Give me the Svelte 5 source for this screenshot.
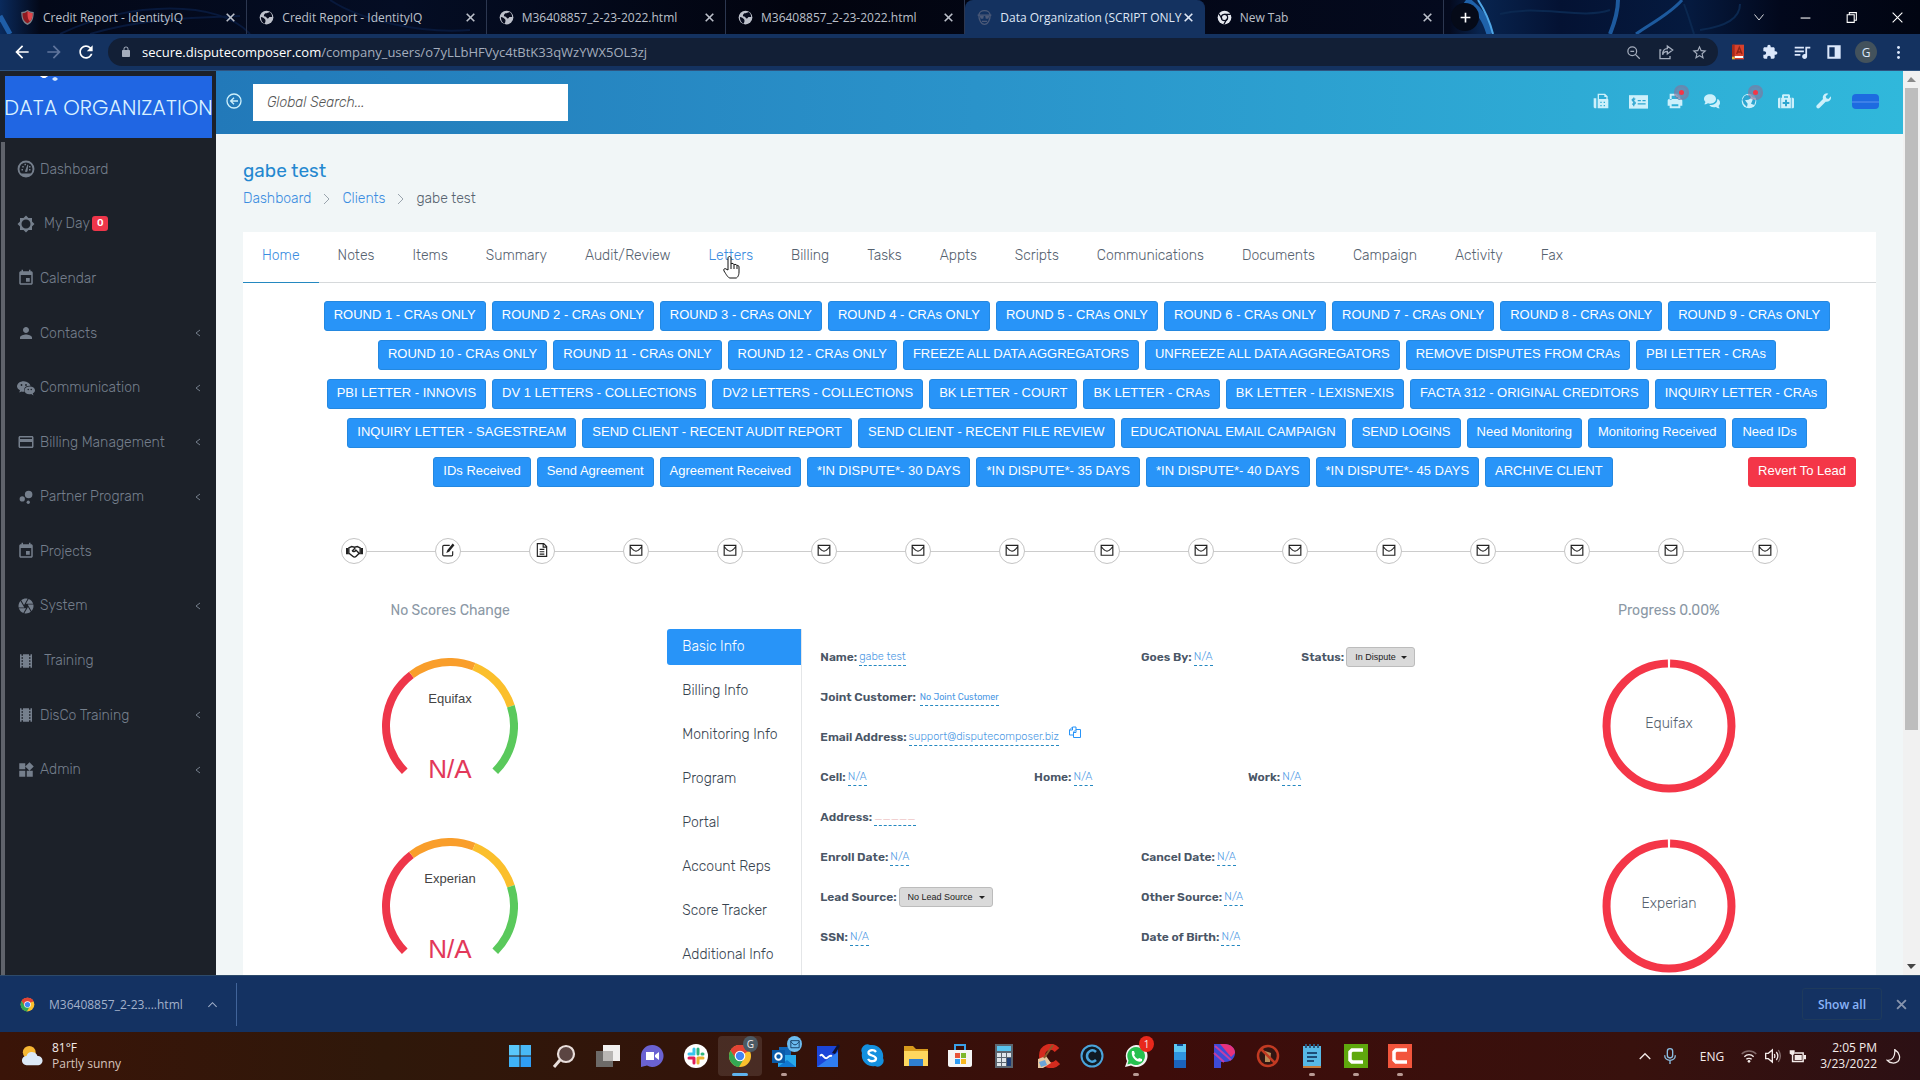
<script>
  const icons = {
    back: '<path d="M20 11H7.83l5.59-5.59L12 4l-8 8 8 8 1.41-1.41L7.83 13H20v-2z"/>',
    forward: '<path d="M4 11h12.17l-5.59-5.59L12 4l8 8-8 8-1.41-1.41L16.17 13H4v-2z"/>',
    reload: '<path d="M17.65 6.35C16.2 4.9 14.21 4 12 4c-4.42 0-7.99 3.58-7.99 8s3.57 8 7.99 8c3.73 0 6.84-2.55 7.73-6h-2.08c-.82 2.33-3.04 4-5.65 4-3.31 0-6-2.69-6-6s2.69-6 6-6c1.66 0 3.14.69 4.22 1.78L13 11h7V4l-2.35 2.35z"/>',
    lock: '<path d="M18 8h-1V6c0-2.76-2.24-5-5-5S7 3.24 7 6v2H6c-1.1 0-2 .9-2 2v10c0 1.1.9 2 2 2h12c1.1 0 2-.9 2-2V10c0-1.1-.9-2-2-2zM15.1 8H8.9V6c0-1.71 1.39-3.1 3.1-3.1s3.1 1.39 3.1 3.1v2z"/>',
    zoomOut: '<g fill="none" stroke="currentColor" stroke-width="2"><circle cx="10" cy="10" r="7"/><path d="M15 15l7 7M7 10h6"/></g>',
    share: '<g fill="none" stroke="currentColor" stroke-width="2"><path d="M5 9H3v13h15v-4"/><path d="M14 3l8 6-8 6v-4c-4 0-6 2-7 5 0-6 3-9 7-9z"/></g>',
    star: '<path d="M22 9.24l-7.19-.62L12 2 9.19 8.63 2 9.24l5.46 4.73L5.82 21 12 17.27 18.18 21l-1.63-7.03L22 9.24zM12 15.4l-3.76 2.27 1-4.28-3.32-2.88 4.38-.38L12 6.1l1.71 4.04 4.38.38-3.32 2.88 1 4.28L12 15.4z"/>',
    book: '<path fill="#d8412b" d="M4 1h17v17H4z"/><path fill="#a82a1a" d="M3 1h4v21H3z"/><path fill="#fff" d="M7 18h13v3H7z"/><path fill="#d8412b" d="M6 21h15v2H6z"/><path fill="#e7b93c" d="M3 19h4v4H3z"/><path fill="none" stroke="#8f2417" stroke-width="2" d="M10 15l4-10 4 10M12 12h5"/>',
    puzzle: '<path d="M20.5 11H19V7c0-1.1-.9-2-2-2h-4V3.5C13 2.12 11.88 1 10.5 1S8 2.12 8 3.5V5H4c-1.1 0-1.99.9-1.99 2v3.8H3.5c1.49 0 2.7 1.21 2.7 2.7s-1.21 2.7-2.7 2.7H2V20c0 1.1.9 2 2 2h3.8v-1.5c0-1.49 1.21-2.7 2.7-2.7 1.49 0 2.7 1.21 2.7 2.7V22H17c1.1 0 2-.9 2-2v-4h1.5c1.38 0 2.5-1.12 2.5-2.5S21.88 11 20.5 11z"/>',
    queue: '<path d="M14 4H1v2.500h13V4zm0 5H1v2.500h13V9zM1 16.500h8V14H1v2.500zM16 4v10.200c-.3-.1-.6-.2-1-.2-1.900 0-3.500 1.500-3.500 3.500S13.100 21 15 21s3.500-1.500 3.500-3.500V6.500H23V4h-7z"/>',
    panel: '<path d="M2 2h20v20H2zm3 3v14h8V5z" fill-rule="evenodd"/>',
    dots: '<circle cx="12" cy="4" r="2.300"/><circle cx="12" cy="12" r="2.300"/><circle cx="12" cy="20" r="2.300"/>',
    close: '<path d="M5 5l14 14M19 5L5 19" fill="none" stroke="currentColor" stroke-width="3"/>',
    plus: '<path d="M12 3v18M3 12h18" fill="none" stroke="currentColor" stroke-width="3"/>',
    winDown: '<path d="M3 7l9 11 9-11" fill="none" stroke="currentColor" stroke-width="1.700"/>',
    winMin: '<path d="M3 13h18" fill="none" stroke="currentColor" stroke-width="2"/>',
    winRestore: '<path d="M4 7h13v14H4zM8 7V3h13v14h-4" fill="none" stroke="currentColor" stroke-width="2"/>',
    winClose: '<path d="M3 3l18 18M21 3L3 21" fill="none" stroke="currentColor" stroke-width="2"/>',
    shield: '<path fill="#7d8088" d="M2 3c4 0 7-1 10-3 3 2 6 3 10 3 0 10-2 17-10 21C4 20 2 13 2 3z"/><path fill="#8f1a20" d="M4 5c4 0 5-1 8-3 3 2 5 3 8 3 0 8-2 13-8 16C6 18 4 13 4 5z"/><path fill="#e0474b" d="M12 2c3 2 5 3 8 3 0 6-1 10-4 13-4-3-4-9-4-16z"/>',
    globe: '<circle cx="12" cy="12" r="11"/><path fill="#070b1d" d="M10 5c3 0 5-1 7-2 3 2 4 5 4 8-2 1-4-1-5 1s-3 2-4 0-5-1-4-4c0-1 1-2 2-3zM3 11c3 0 5 2 7 4 1 2 0 5-1 7-4-2-6-6-6-11z"/>',
    face: '<g fill="none" stroke="#4c5a78" stroke-width="2"><path d="M3 9c0-5 4-8 9-8s9 3 9 8-3 14-9 14S3 14 3 9z"/><path d="M1 8h22M8 18h8"/></g><path fill="#4c5a78" d="M4 9h7l-1 5H6zM13 9h7l-2 5h-4z"/>',
    chromeMono: '<circle cx="12" cy="12" r="11" fill="#e6e9f0"/><circle cx="12" cy="12" r="5" fill="none" stroke="#070b1d" stroke-width="2"/><path d="M12 7h10M8 14L3 6M16 14l-5 9" stroke="#070b1d" stroke-width="2"/>',
    chrome: '<circle cx="12" cy="12" r="11" fill="#fbc02d"/><path fill="#e24435" d="M2.500 6.500A11 11 0 0 1 21.500 6.500L12 12z"/><path fill="#e24435" d="M12 7h9.800A11 11 0 0 0 2.500 6.500L7.500 15z"/><path fill="#34a853" d="M2.500 6.500A11 11 0 0 0 11 23l5-8.500-8 .5z"/><circle cx="12" cy="12" r="5.300" fill="#fff"/><circle cx="12" cy="12" r="4.200" fill="#4285f4"/>',
    arrowCircle: '<g fill="none" stroke="currentColor" stroke-width="2"><circle cx="12" cy="12" r="10.500"/><path d="M18 12H7M12 7l-5 5 5 5"/></g>',
    fax: '<path d="M1 8h4v15H2.500L1 21.500zM7 1h11l4 4v4c1 0 1 1 1 2v12H7zm2 2v6h11V6h-3V3zm2 10v2h2v-2zm5 0v2h2v-2zm-5 5v2h2v-2zm5 0v2h2v-2z" fill-rule="evenodd"/>',
    check: '<path d="M0 4h24v17H0z"/><g stroke="#2da5d0" stroke-width="1.500" fill="none"><path d="M8 9c-3-1-4 0-4 1 0 3 4 1 4 4 0 1-2 2-4 1M6 7v11M11 11h4M17 11h4M11 15h10"/></g>',
    printer: '<path d="M5 1h11l4 4v5H4V1zm2 3v6h10V6h-3V4zM1 12c0-2 1-3 3-3h16c2 0 3 1 3 3v7h-3v4H4v-4H1zm6 5v3h10v-3z" fill-rule="evenodd"/>',
    comments: '<path d="M9 2c5 0 9 3 9 7s-4 7-9 7c-1 0-2 0-3-.5C4 17 2 17 0 17c1-1 2-2 2-4C1 12 0 11 0 9c0-4 4-7 9-7z"/><path d="M20 9c3 1 4 3 4 6 0 2-1 3-2 4 0 2 1 3 2 4-2 0-4 0-6-2-5 1-8 0-10-3 8 0 12-3 12-9z"/>',
    world: '<circle cx="12" cy="12" r="11"/><path fill="#2da5d0" d="M8 3l6 1 1 4-4 2-5 1 4 5-1 5-5-5-2-6 3-5zM18 9l4 2-2 7-5-2z"/>',
    medkit: '<path d="M8 2h8c1 0 2 1 2 2v3h4c1 0 2 1 2 2v12c0 1-1 2-2 2H2c-1 0-2-1-2-2V9c0-1 1-2 2-2h4V4c0-1 1-2 2-2zm1 3v2h6V5z" fill-rule="evenodd"/><path fill="none" stroke="#2da5d0" stroke-width="1" d="M4 7v16M20 7v16"/><path fill="none" stroke="#2da5d0" stroke-width="3" d="M12 10v10M7 15h10"/>',
    wrench: '<path d="M15 1c2-1 4-1 5 0l-4 4 1 3 3 1 4-4c1 5-3 9-8 8l-9 9c-3 3-7-1-4-4l9-9c-1-3 0-6 3-8z"/>',
    gauge: '<g fill="none" stroke="currentColor" stroke-width="2.500"><circle cx="12" cy="12" r="10"/></g><path d="M5 18h14l-3 4H8z"/><path d="M11 14l3-8 1 1-1 8c-1 2-4 1-3-1zM6 12h2v2H6zM7 8h2v2H7zM10 5h2v2h-2zM16 12h2v2h-2zM16 8h2v2h-2z"/>',
    sun: '<path fill-rule="evenodd" d="M20 8.700V4h-4.700L12 .7 8.700 4H4v4.700L.7 12 4 15.300V20h4.700l3.300 3.300 3.300-3.300H20v-4.700l3.300-3.300zM12 18a6 6 0 1 1 0-12 6 6 0 0 1 0 12z"/>',
    event: '<path d="M17 12h-5v5h5v-5zM16 1v2H8V1H6v2H5c-1.110 0-1.990.9-1.990 2L3 19c0 1.100.89 2 2 2h14c1.100 0 2-.9 2-2V5c0-1.100-.9-2-2-2h-1V1h-2zm3 18H5V8h14v11z"/>',
    person: '<path d="M12 12c2.210 0 4-1.790 4-4s-1.790-4-4-4-4 1.790-4 4 1.790 4 4 4zm0 2c-2.670 0-8 1.340-8 4v2h16v-2c0-2.660-5.330-4-8-4z"/>',
    wechat: '<path d="M9 3c5 0 8 3 9 6-6-1-10 3-8 8-2 0-3 0-4-.5L3 18l1-3c-2-1-4-3-4-5 0-4 4-7 9-7z"/><path d="M17 10c4 0 7 2 7 5 0 2-1 3-3 4l1 3-3-2c-5 1-9-1-9-5 0-3 3-5 7-5z"/><g fill="#1c2129"><circle cx="6" cy="8" r="1.200"/><circle cx="12" cy="8" r="1.200"/><circle cx="15" cy="14" r="1"/><circle cx="19" cy="14" r="1"/></g>',
    card: '<path d="M20 4H4c-1.110 0-1.990.89-1.990 2L2 18c0 1.110.89 2 2 2h16c1.110 0 2-.89 2-2V6c0-1.110-.89-2-2-2zm0 14H4v-6h16v6zm0-10H4V6h16v2z"/>',
    bubbles: '<circle cx="7" cy="14.500" r="3.500"/><circle cx="15" cy="19" r="2.200"/><circle cx="15.500" cy="8.500" r="5"/>',
    shutter: '<path d="M9.400 10.500l4.770-8.260C13.470 2.090 12.750 2 12 2c-2.400 0-4.600.85-6.320 2.250l3.660 6.350.06-.1zM21.540 9c-.92-2.920-3.150-5.260-6-6.340L11.880 9h9.660zm.26 1h-7.490l.29.5 4.760 8.250C21 16.970 22 14.610 22 12c0-.69-.07-1.350-.2-2zM8.540 12l-3.900-6.750C3.010 7.030 2 9.390 2 12c0 .69.07 1.350.2 2h7.490l-1.150-2zm-6.080 3c.92 2.920 3.150 5.260 6 6.340L12.120 15H2.460zm11.270 0l-3.900 6.760c.7.150 1.420.24 2.170.24 2.400 0 4.600-.85 6.320-2.250l-3.660-6.350-.93 1.600z"/>',
    film: '<path d="M18 3v2h-2V3H8v2H6V3H4v18h2v-2h2v2h8v-2h2v2h2V3h-2zM8 17H6v-2h2v2zm0-4H6v-2h2v2zm0-4H6V7h2v2zm10 8h-2v-2h2v2zm0-4h-2v-2h2v2zm0-4h-2V7h2v2z"/>',
    widgets: '<path d="M13 13v8h8v-8h-8zM3 21h8v-8H3v8zM3 3v8h8V3H3zm13.660-1.310L11 7.340 16.660 13l5.660-5.660-5.660-5.650z"/>',
    handshake: '<g fill="none" stroke="currentColor" stroke-width="2"><path d="M4 7l4-2 4 1 4-1 4 2v8h-2l-4 4c-1 1-3 1-4 0l-5-4H4z"/><path d="M13 7l-4 4c1 2 4 1 5-1l5 5"/></g><path d="M0 7h3v9H0zM21 7h3v9h-3z"/>',
    edit: '<g fill="none" stroke="currentColor" stroke-width="2"><path d="M15 4H5C4 4 3 5 3 6v14c0 1 1 2 2 2h13c1 0 2-1 2-2v-6"/></g><path d="M20 1l3 3-9 11-5 2 2-5z"/>',
    file: '<g fill="none" stroke="currentColor" stroke-width="2"><path d="M4 1h11l5 5v17H4zM14 1v6h6M8 11h8M8 15h8M8 19h8"/></g>',
    mail: '<path d="M2 4h20v17H2zM2 6c3 4 6 8 10 8s7-4 10-8" fill="none" stroke="currentColor" stroke-width="2"/>',
    copy: '<g fill="none" stroke="currentColor" stroke-width="2"><path d="M9 18H1V8l6-6h7v5M7 2v6H1"/><path d="M9 12l5-5h9v16H9zM14 7v6H9"/></g>',
    windows: '<path fill="#5ac8fa" d="M1 1h10.500v10.500H1z"/><path fill="#49b8f7" d="M12.500 1H23v10.500H12.500z"/><path fill="#3fb2f7" d="M1 12.500h10.500V23H1z"/><path fill="#2f9df4" d="M12.500 12.500H23V23H12.500z"/>',
    search: '<circle cx="14" cy="10" r="8" fill="#5b4542" stroke="#e9dedb" stroke-width="2.200"/><path d="M8 16l-6 7" stroke="#e9dedb" stroke-width="3"/>',
    taskview: '<path fill="#f2f0ef" d="M7 1h17v16H7z"/><path fill="#6d6a68" d="M0 7h17v16H0z"/><path fill="#b9b6b4" d="M7 7h10v10H7z"/>',
    teams: '<path fill="#6a62d2" d="M12 1a11 11 0 1 1-5 20.500L1 23V12A11 11 0 0 1 12 1z"/><path fill="#fff" d="M6 8h8v8H6zM15 11l4-3v8l-4-3z"/>',
    slack: '<circle cx="12" cy="12" r="12" fill="#fff"/><g fill="none" stroke-width="3" stroke-linecap="round"><path stroke="#36c5f0" d="M10 5v4M5 10h5"/><path stroke="#2eb67d" d="M14 5v5M18 10h1"/><path stroke="#ecb22e" d="M14 14v5M14 14h5"/><path stroke="#e01e5a" d="M10 14v5M5 14h5"/></g>',
    outlook: '<path fill="#1066b8" d="M7 3h12v14H7z"/><path fill="#28a8ea" d="M6 11h18v12H6z"/><path fill="#0f78d4" d="M6 23l9-7 9 7z"/><path fill="#0a5aa8" d="M0 6h13v13H0z"/><circle cx="6.500" cy="12.500" r="3.200" fill="none" stroke="#fff" stroke-width="2"/>',
    whiteboard: '<path fill="#1b45d8" d="M1 2h21v21H1z"/><path fill="#2f7df0" d="M1 23L22 8v15z"/><path d="M4 12c3-4 4 4 7 2s3-3 5-2" fill="none" stroke="#fff" stroke-width="2"/><path d="M16 9l6-9 2 2-5 8z" fill="#0c1030"/>',
    skype: '<path fill="#1490df" d="M12 1a11 11 0 0 1 11 13 6 6 0 0 1-8 8A11 11 0 0 1 2 9a6 6 0 0 1 8-8z"/><path d="M16 8c-2-3-8-2-7.500 1 .5 3 7 2 7.500 5.500 0 3-6 4-8 .5" fill="none" stroke="#fff" stroke-width="2.300"/>',
    folder: '<path fill="#d89a1c" d="M0 2h9l3 3h12v6H0z"/><path fill="#ffd75e" d="M0 7h24v15H0z"/><path fill="#2f7fd1" d="M5 15h14v7H5z"/>',
    store: '<path fill="none" stroke="#3aa0e8" stroke-width="2" d="M7 7V1h10v6"/><path fill="#f5f5f5" d="M0 6h24v15c0 1-1 2-2 2H2c-1 0-2-1-2-2z"/><path fill="#e8553a" d="M7 9h5v5H7z"/><path fill="#7eb82e" d="M13 9h5v5h-5z"/><path fill="#2f9df4" d="M7 15h5v5H7z"/><path fill="#f7b820" d="M13 15h5v5h-5z"/>',
    calc: '<path fill="#5c6670" d="M3 0h18v24H3z"/><path fill="#59c3ee" d="M5 2h14v5H5z"/><g fill="#dfe5ea"><path d="M5 9h4v4H5zM10 9h4v4h-4zM15 9h4v4h-4zM5 14h4v4H5zM10 14h4v4h-4zM5 19h4v3H5zM10 19h4v3h-4z"/></g><path fill="#1d3d77" d="M15 14h4v8h-4z"/>',
    ccleaner: '<path d="M21 6c-5-6-15-3-15 6s10 12 16 6" fill="none" stroke="#d52b1e" stroke-width="6"/><path fill="#e6c8a2" d="M2 15l8-3 5 7-8 5H2z"/><path fill="#6ba4d8" d="M3 18l6-2 2 5-6 2z"/><path d="M8 14L17 1" stroke="#8b5a2b" stroke-width="2"/>',
    copyright: '<circle cx="12" cy="12" r="10.500" fill="#101a24" stroke="#4aa4dc" stroke-width="2"/><path d="M16 8c-4-4-9 0-9 4s5 8 9 4" fill="none" stroke="#4aa4dc" stroke-width="2.500"/>',
    whatsapp: '<path fill="#f2f2f2" d="M12 1a11 11 0 1 1-5 20.500L1 23l2-6A11 11 0 0 1 12 1z"/><path fill="#26c04f" d="M12 3a9 9 0 1 1-5 16.500L3.500 20.500l1-4A9 9 0 0 1 12 3z"/><path fill="#fff" d="M8 7h2l1 3-1 1c1 2 2 3 4 4l1-1 3 1v2c-3 3-12-3-10-10z"/>',
    phone: '<path fill="#5cc8f5" d="M6 0h12v8H6z"/><path fill="#2f95e0" d="M6 8h12v8H6z"/><path fill="#1a63bd" d="M6 16h12v8H6z"/><path fill="#124a91" d="M9 0h6v2H9z"/>',
    parade: '<path fill="#3d4bd8" d="M2 0h10c7 0 11 4 11 9s-4 9-10 9H9v6H2z"/><path fill="#e8327c" d="M8 0h4c7 0 11 4 11 9l-4 4z"/><path d="M3 2l16 14M2 9l10 9" stroke="#c13fa6" stroke-width="2"/>',
    blocked: '<circle cx="12" cy="12" r="10" fill="#301512" stroke="#c23a22" stroke-width="2.500"/><path fill="#b98c58" d="M9 7l6 2-1 9H9z"/><path d="M5 5l14 14" stroke="#c23a22" stroke-width="2.500"/>',
    notes: '<path fill="#57b9e6" d="M3 2h18v20H3z"/><path fill="#c57b3b" d="M3 22h18v2H3z"/><path d="M6 0v4M10 0v4M14 0v4M18 0v4" stroke="#2a5a80" stroke-width="2"/><path d="M7 9h10M7 13h10M7 17h7" stroke="#1d4d78" stroke-width="2"/>',
    camtasia: '<path fill="#5fa80d" d="M0 0h24v24H0z"/><path d="M19 6H8L6 8v8l2 2h11" fill="none" stroke="#fff" stroke-width="3.500"/>',
    camRec: '<path fill="#f2553c" d="M0 0h24v24H0z"/><path d="M19 6H8L6 8v8l2 2h11" fill="none" stroke="#fff" stroke-width="3.500"/>',
    weather: '<circle cx="9" cy="8" r="7" fill="#f7b733"/><path fill="#dce9f7" d="M6 22a5 5 0 0 1 0-10c1-3 4-5 7-4 3 0 4 2 5 4a5 5 0 0 1 1 10z"/>',
    up: '<path d="M3 17l9-9 9 9" fill="none" stroke="currentColor" stroke-width="2.300"/>',
    mic: '<g fill="none" stroke="currentColor" stroke-width="2"><rect x="8" y="1" width="8" height="14" rx="4"/><path d="M4 11c0 10 16 10 16 0M12 19v5"/></g>',
    wifi: '<g fill="none" stroke="currentColor" stroke-width="2"><path d="M1 9c6-6 16-6 22 0" opacity=".4"/><path d="M5 13c4-4 10-4 14 0M8 17c2-2 6-2 8 0"/></g><circle cx="12" cy="20" r="2"/>',
    sound: '<g fill="none" stroke="currentColor" stroke-width="2"><path d="M1 8h4l6-5v18l-6-5H1zM14 9c1 2 1 4 0 6M17 6c3 4 3 8 0 12"/><path d="M20 3c4 6 4 12 0 18" opacity=".4"/></g>',
    battery: '<path d="M8 7h12v12H5v-5" fill="none" stroke="currentColor" stroke-width="2"/><path d="M8 10h10v7H8zM21 10h3v6h-3zM1 3h7v5L6 10v4H4v-4L1 8z"/>',
    moon: '<path d="M14 1c8 5 10 14 5 19-5 4-13 3-17-2 8 1 13-6 12-17z" fill="none" stroke="currentColor" stroke-width="2"/>',
  }

  const browserTabs = [
    { icon: "shield", title: "Credit Report - IdentityIQ" },
    { icon: "globe", title: "Credit Report - IdentityIQ" },
    { icon: "globe", title: "M36408857_2-23-2022.html" },
    { icon: "globe", title: "M36408857_2-23-2022.html" },
    { icon: "face", title: "Data Organization (SCRIPT ONLY", active: true },
    { icon: "chromeMono", title: "New Tab" },
  ]

  const menu = [
    { icon: "gauge", label: "Dashboard" },
    { icon: "sun", label: "My Day", badge: 0, indent: true },
    { icon: "event", label: "Calendar" },
    { icon: "person", label: "Contacts", sub: true },
    { icon: "wechat", label: "Communication", sub: true },
    { icon: "card", label: "Billing Management", sub: true },
    { icon: "bubbles", label: "Partner Program", sub: true },
    { icon: "event", label: "Projects" },
    { icon: "shutter", label: "System", sub: true },
    { icon: "film", label: "Training", indent: true },
    { icon: "film", label: "DisCo Training", sub: true },
    { icon: "widgets", label: "Admin", sub: true },
  ]

  const tools = [
    { icon: "fax", label: "Fax" },
    { icon: "check", label: "Checks", size: 19 },
    { icon: "printer", label: "Print queue", alert: true },
    { icon: "comments", label: "Messages" },
    { icon: "world", label: "Portal", alert: true },
    { icon: "medkit", label: "Support" },
    { icon: "wrench", label: "Settings" },
  ]

  const tabs = [
    "Home", "Notes", "Items", "Summary", "Audit/Review", "Letters", "Billing", "Tasks",
    "Appts", "Scripts", "Communications", "Documents", "Campaign", "Activity", "Fax",
  ]

  const actionRows = [
    [1, 2, 3, 4, 5, 6, 7, 8, 9].map((n) => `ROUND ${n} - CRAs ONLY`),
    ["ROUND 10 - CRAs ONLY", "ROUND 11 - CRAs ONLY", "ROUND 12 - CRAs ONLY", "FREEZE ALL DATA AGGREGATORS", "UNFREEZE ALL DATA AGGREGATORS", "REMOVE DISPUTES FROM CRAs", "PBI LETTER - CRAs"],
    ["PBI LETTER - INNOVIS", "DV 1 LETTERS - COLLECTIONS", "DV2 LETTERS - COLLECTIONS", "BK LETTER - COURT", "BK LETTER - CRAs", "BK LETTER - LEXISNEXIS", "FACTA 312 - ORIGINAL CREDITORS", "INQUIRY LETTER - CRAs"],
    ["INQUIRY LETTER - SAGESTREAM", "SEND CLIENT - RECENT AUDIT REPORT", "SEND CLIENT - RECENT FILE REVIEW", "EDUCATIONAL EMAIL CAMPAIGN", "SEND LOGINS", "Need Monitoring", "Monitoring Received", "Need IDs"],
    ["IDs Received", "Send Agreement", "Agreement Received", "*IN DISPUTE*- 30 DAYS", "*IN DISPUTE*- 35 DAYS", "*IN DISPUTE*- 40 DAYS", "*IN DISPUTE*- 45 DAYS", "ARCHIVE CLIENT"],
  ]

  const steps = ["handshake", "edit", "file", ...Array(13).fill("mail")]

  const bureaus = ["Equifax", "Experian"]

  const sections = [
    "Basic Info", "Billing Info", "Monitoring Info", "Program",
    "Portal", "Account Reps", "Score Tracker", "Additional Info",
  ]

  // span is counted in twelfths of the row
  const fields = [
    { label: "Name:", value: "gabe test", span: 6 },
    { label: "Goes By:", value: "N/A", span: 3 },
    { label: "Status:", select: "In Dispute", span: 3 },
    { label: "Joint Customer:", value: "No Joint Customer", span: 12, small: true },
    { label: "Email Address:", value: "support@disputecomposer.biz", span: 12, copy: true },
    { label: "Cell:", value: "N/A", span: 4 },
    { label: "Home:", value: "N/A", span: 4 },
    { label: "Work:", value: "N/A", span: 4 },
    { label: "Address:", value: "_____", span: 12, blank: true },
    { label: "Enroll Date:", value: "N/A", span: 6 },
    { label: "Cancel Date:", value: "N/A", span: 6 },
    { label: "Lead Source:", select: "No Lead Source", span: 6 },
    { label: "Other Source:", value: "N/A", span: 6 },
    { label: "SSN:", value: "N/A", span: 6 },
    { label: "Date of Birth:", value: "N/A", span: 6 },
  ]

  const apps = [
    "windows", "search", "taskview", "teams", "slack", "chrome", "outlook", "whiteboard", "skype", "folder", "store",
    "calc", "ccleaner", "copyright", "whatsapp", "phone", "parade", "blocked", "notes", "camtasia", "camRec",
  ]
  const running = ["outlook", "whatsapp", "notes", "camtasia", "camRec"]

  const gaugeBands = [
    { from: -135, to: -37, color: "#ee364a" },
    { from: -37, to: 22, color: "#f99e2b" },
    { from: 22, to: 72, color: "#fbbf2c" },
    { from: 72, to: 135, color: "#5ac95c" },
  ]

  function arc(from, to, r = 64, c = 68) {
    const point = (deg) => {
      const a = (deg * Math.PI) / 180
      return `${(c + r * Math.sin(a)).toFixed(2)} ${(c - r * Math.cos(a)).toFixed(2)}`
    }
    return `M${point(from)}A${r} ${r} 0 0 1 ${point(to)}`
  }
</script>

{#snippet icon(name, size = 16)}
  <svg class="icon" width={size} height={size} viewBox="0 0 24 24" fill="currentColor" aria-hidden="true">{@html icons[name]}</svg>
{/snippet}

<div class="desktop">
  <div class="tabstrip">
    <svg class="swirls" viewBox="0 0 1920 34" preserveAspectRatio="none" aria-hidden="true">
      <g fill="none">
        <path d="M0 16L10 34" stroke="#1f5ea8" stroke-width="5" />
        <path d="M60 34C130 0 220 0 250 34M90 34C130 22 170 18 240 16M330 0C360 20 420 34 470 30" stroke="#08193c" stroke-width="2" />
        <path d="M1466 0C1480 10 1486 20 1490 34" stroke="#1f62aa" stroke-width="7" />
        <path d="M1478 0C1486 12 1490 22 1493 34" stroke="#4fa6e6" stroke-width="2" />
        <path d="M1618 0C1618 12 1614 24 1610 34" stroke="#1d5a9e" stroke-width="4" />
        <path d="M1682 0C1670 14 1650 24 1636 34" stroke="#1d5a9e" stroke-width="3" />
        <path d="M1500 14C1540 4 1580 20 1610 10M1684 4C1690 20 1692 28 1694 34M1700 30C1730 26 1740 16 1740 4" stroke="#0b2850" stroke-width="2" />
      </g>
    </svg>
    <div class="browser-tabs">
      {#each browserTabs as tab}
        <div class="browser-tab" class:active={tab.active}>
          {@render icon(tab.icon, 15)}
          <span class="tab-title">{tab.title}</span>
          <button class="bare" aria-label="Close tab">{@render icon("close", 13)}</button>
        </div>
      {/each}
    </div>
    <button class="bare new-tab" aria-label="New tab">{@render icon("plus", 13)}</button>
    <div class="window-controls">
      <button class="bare" aria-label="Search tabs">{@render icon("winDown", 12)}</button>
      <button class="bare" aria-label="Minimize">{@render icon("winMin", 13)}</button>
      <button class="bare" aria-label="Restore">{@render icon("winRestore", 13)}</button>
      <button class="bare" aria-label="Close">{@render icon("winClose", 13)}</button>
    </div>
  </div>

  <div class="toolbar">
    <button class="bare nav-btn" aria-label="Back">{@render icon("back", 20)}</button>
    <button class="bare nav-btn dim" aria-label="Forward">{@render icon("forward", 20)}</button>
    <button class="bare nav-btn" aria-label="Reload">{@render icon("reload", 20)}</button>
    <div class="omnibox">
      {@render icon("lock", 12)}
      <span class="url"><b>secure.disputecomposer.com</b>/company_users/o7yLLbHFVyc4tBtK33qWzYWX5OL3zj</span>
      <button class="bare" aria-label="Zoom">{@render icon("zoomOut", 15)}</button>
      <button class="bare" aria-label="Share">{@render icon("share", 16)}</button>
      <button class="bare" aria-label="Bookmark">{@render icon("star", 17)}</button>
    </div>
    <div class="extensions">
      <button class="bare" aria-label="Dictionary">{@render icon("book", 16)}</button>
      <button class="bare" aria-label="Extensions">{@render icon("puzzle", 16)}</button>
      <button class="bare" aria-label="Media">{@render icon("queue", 17)}</button>
      <button class="bare" aria-label="Side panel">{@render icon("panel", 16)}</button>
      <button class="bare avatar">G</button>
      <button class="bare" aria-label="Menu">{@render icon("dots", 15)}</button>
    </div>
  </div>

  <div class="page">
    <aside>
      <a class="logo" href="#home">DATA ORGANIZATION</a>
      <nav class="menu">
        {#each menu as item}
          <a href="#menu" class:indent={item.indent}>
            {@render icon(item.icon, 18)}
            <span>{item.label}</span>
            {#if item.badge !== undefined}<em>{item.badge}</em>{/if}
            {#if item.sub}
              <svg class="caret" width="6" height="8" viewBox="0 0 6 8" aria-hidden="true"><path d="M5 1L1 4l4 3" /></svg>
            {/if}
          </a>
        {/each}
      </nav>
    </aside>

    <main>
      <header>
        <button class="bare collapse" aria-label="Collapse menu">{@render icon("arrowCircle", 16)}</button>
        <input type="search" placeholder="Global Search..." aria-label="Global Search" />
        <div class="tools">
          {#each tools as tool}
            <button class="bare tool" aria-label={tool.label}>
              {@render icon(tool.icon, tool.size)}
              {#if tool.alert}<i class="pulse"></i>{/if}
            </button>
          {/each}
          <span class="brand-pill"></span>
        </div>
      </header>

      <div class="title">
        <h1>gabe test</h1>
        <div class="crumbs">
          <a href="#dashboard">Dashboard</a>
          <svg width="7" height="12" viewBox="0 0 7 12" aria-hidden="true"><path d="M1 1l5 5-5 5" /></svg>
          <a href="#clients">Clients</a>
          <svg width="7" height="12" viewBox="0 0 7 12" aria-hidden="true"><path d="M1 1l5 5-5 5" /></svg>
          <span>gabe test</span>
        </div>
      </div>

      <section class="card">
        <nav class="tabs">
          {#each tabs as tab}
            <a href="#tab" class:active={tab === "Home"} class:hover={tab === "Letters"}>
              {tab}
              {#if tab === "Letters"}
                <svg class="pointer" width="18" height="24" viewBox="0 0 18 24" aria-hidden="true">
                  <path d="M6 15V3c0-2 3-2 3 0v6c0-1 3-1 3 1 0-1 3-1 3 1 0-1 2-1 2 1v5c0 4-2 6-3 6H8c-2 0-4-4-6-7-1-2 1-3 2-2z" />
                  <path d="M9 9v5M12 10v4M15 11v3" />
                </svg>
              {/if}
            </a>
          {/each}
        </nav>

        <div class="actions">
          {#each actionRows as row, i}
            <div class="action-row">
              <div class="action-group">
                {#each row as label}
                  <button class="action">{label}</button>
                {/each}
              </div>
              {#if i === actionRows.length - 1}
                <button class="action danger">Revert To Lead</button>
              {/if}
            </div>
          {/each}
        </div>

        <div class="steps">
          {#each steps as step}
            <span class="step">{@render icon(step, step === "handshake" ? 17 : 14)}</span>
          {/each}
        </div>

        <div class="columns">
          <div class="scores">
            <h2>No Scores Change</h2>
            {#each bureaus as bureau}
              <svg class="gauge" width="136" height="136" viewBox="0 0 136 136">
                {#each gaugeBands as band}
                  <path d={arc(band.from, band.to)} stroke={band.color} />
                {/each}
                <text class="bureau" x="68" y="45">{bureau}</text>
                <text class="score" x="68" y="120">N/A</text>
              </svg>
            {/each}
          </div>

          <div class="client">
            <nav class="sections">
              {#each sections as section, i}
                <a href="#section" class:active={i === 0}>{section}</a>
              {/each}
            </nav>
            <div class="fields">
              {#each fields as field, i}
                <div class="field" style:grid-column={"span " + field.span}>
                  {#if field.select}
                    <label for={"field-" + i}>{field.label}</label>
                    <span class="select">
                      <select id={"field-" + i}><option>{field.select}</option></select>
                    </span>
                  {:else}
                    <b>{field.label}</b>
                    <a href="#edit" class:small={field.small} class:blank={field.blank}>{field.value}</a>
                    {#if field.copy}
                      <button class="bare copy" aria-label="Copy email">{@render icon("copy", 12)}</button>
                    {/if}
                  {/if}
                </div>
              {/each}
            </div>
          </div>

          <div class="scores">
            <h2>Progress 0.00%</h2>
            {#each bureaus as bureau}
              <svg class="gauge ring" width="136" height="136" viewBox="0 0 136 136">
                <path d={arc(1, 180, 62.5)} stroke="#f43648" />
                <path d={arc(180, 359, 62.5)} stroke="#f43648" />
                <text class="bureau" x="68" y="70">{bureau}</text>
              </svg>
            {/each}
          </div>
        </div>
      </section>
    </main>

    <div class="scrollbar">
      <svg width="9" height="5" viewBox="0 0 9 5" aria-hidden="true"><path d="M0 5l4-5 5 5z" fill="#8a8a8a" /></svg>
      <span class="thumb"></span>
      <svg width="9" height="5" viewBox="0 0 9 5" aria-hidden="true"><path d="M0 0h9L4 5z" fill="#444" /></svg>
    </div>
  </div>

  <div class="downloads">
    <div class="download">
      {@render icon("chrome", 15)}
      <span>M36408857_2-23....html</span>
      <button class="bare" aria-label="Download options">{@render icon("up", 11)}</button>
    </div>
    <button class="bare show-all">Show all</button>
    <button class="bare" aria-label="Close downloads">{@render icon("close", 15)}</button>
  </div>

  <div class="taskbar">
    <div class="weather">
      {@render icon("weather", 22)}
      <div><span>81°F</span><span class="soft">Partly sunny</span></div>
    </div>
    <div class="apps">
      {#each apps as app}
        <button class="bare app" class:current={app === "chrome"} class:running={running.includes(app)} aria-label={app}>
          {@render icon(app, 24)}
          {#if app === "chrome"}<span class="bubble grey">G</span>{/if}
          {#if app === "outlook"}<span class="bubble blue">{@render icon("mail", 10)}</span>{/if}
          {#if app === "whatsapp"}<span class="bubble red">1</span>{/if}
        </button>
      {/each}
    </div>
    <div class="tray">
      {@render icon("up", 14)}
      <span class="mic">{@render icon("mic", 16)}</span>
      <span class="lang">ENG</span>
      <span class="status">
        {@render icon("wifi", 16)}
        {@render icon("sound", 16)}
        {@render icon("battery", 17)}
      </span>
      <div class="clock"><span>2:05 PM</span><span>3/23/2022</span></div>
      {@render icon("moon", 15)}
    </div>
  </div>
</div>

<style>
  :global(body) {
    margin: 0;
  }

  .desktop {
    display: flex;
    flex-direction: column;
    height: 100vh;
    overflow: hidden;
    font-family: "Segoe UI", "Open Sans", sans-serif;
    font-size: 12px;
    color: #fff;
  }

  .icon {
    flex: none;
    display: block;
  }

  .bare {
    display: flex;
    align-items: center;
    justify-content: center;
    padding: 0;
    border: 0;
    background: none;
    color: inherit;
    font: inherit;
  }

  a {
    text-decoration: none;
    color: inherit;
  }

  /* browser chrome */
  .tabstrip {
    position: relative;
    display: flex;
    align-items: center;
    flex: none;
    height: 34px;
    padding-left: 8px;
    background: linear-gradient(90deg, #0a2a5c 0, #030818 40px, #040d24 400px, #02040f 800px, #040a1e 1450px, #08244f 1480px, #041233 1560px, #051a3f 1690px, #02081c 1780px, #010512);
  }
  .swirls {
    position: absolute;
    inset: 0;
    width: 100%;
    height: 100%;
  }
  .browser-tabs {
    position: relative;
    display: flex;
    width: 1436px;
  }
  .browser-tab {
    box-sizing: border-box;
    display: flex;
    align-items: center;
    flex: 1;
    min-width: 0;
    height: 34px;
    padding: 0 9px 0 12px;
    border-right: 1px solid #2c3750;
    color: #bcc0ca;
  }
  .browser-tab.active {
    border-color: #143260;
    border-radius: 8px 8px 0 0;
    background: #143260;
    color: #dfe7f5;
  }
  .tab-title {
    flex: 1;
    margin-left: 8px;
    overflow: hidden;
    white-space: nowrap;
  }
  .new-tab {
    position: relative;
    width: 28px;
    height: 28px;
    margin-left: 7px;
    border-radius: 50%;
    background: #050a18;
  }
  .window-controls {
    position: relative;
    display: flex;
    margin-left: auto;
    height: 28px;
  }
  .window-controls button {
    width: 46px;
  }

  .toolbar {
    display: flex;
    align-items: center;
    flex: none;
    height: 36px;
    padding-left: 6px;
    background: #143260;
    border-bottom: 1px solid #2f5480;
  }
  .nav-btn {
    width: 32px;
  }
  .nav-btn.dim {
    color: #60759c;
  }
  .omnibox {
    display: flex;
    align-items: center;
    flex: 1;
    height: 28px;
    margin-left: 6px;
    padding: 0 10px 0 12px;
    gap: 17px;
    border-radius: 14px;
    background: #121f36;
    color: #a4adbd;
  }
  .url {
    flex: 1;
    margin-left: -7px;
    font-size: 13px;
  }
  .url b {
    font-weight: 400;
    color: #fff;
  }
  .extensions {
    display: flex;
    align-items: center;
    margin-left: 4px;
    padding-right: 6px;
    color: #dce8fb;
  }
  .extensions button {
    width: 32px;
  }
  .extensions .avatar {
    width: 22px;
    height: 22px;
    margin: 0 5px;
    border-radius: 50%;
    background: #43525c;
  }

  /* web page */
  .page {
    display: flex;
    flex: 1;
    min-height: 0;
    background: #f1f6f7;
    font-family: Rubik, Roboto, sans-serif;
    font-weight: 300;
    font-size: 14px;
  }
  aside {
    box-sizing: border-box;
    flex: none;
    width: 216px;
    padding: 5px 4px 0 0;
    background: #1c2129;
  }
  .logo {
    display: flex;
    align-items: center;
    justify-content: center;
    height: 62px;
    margin-left: 5px;
    background:
      radial-gradient(ellipse 4px 2px at 39px 0, #fff 80%, transparent),
      radial-gradient(ellipse 3px 2px at 50px 3px, #cfe4ff 70%, transparent),
      #2066e3;
    font-family: Poppins, Lato, sans-serif;
    font-size: 21px;
    white-space: nowrap;
    color: #d8f1ff;
  }
  .menu {
    display: grid;
    grid-template-rows: repeat(12, 1fr);
    height: 655px;
    margin: 4px 0 0 1px;
    padding-bottom: 200px;
    border-left: 4px solid #5f636b;
    color: #757f8c;
  }
  .menu a {
    display: flex;
    align-items: center;
    padding: 0 11px 0 12px;
    gap: 5px;
  }
  .menu .indent span {
    margin-left: 4px;
  }
  .menu em {
    padding: 0 5px;
    margin-left: -3px;
    border-radius: 3px;
    background: #ee364a;
    color: #fff;
    font-style: normal;
    font-weight: 500;
    font-size: 10px;
    line-height: 15px;
  }
  .caret {
    margin-left: auto;
    fill: none;
    stroke: currentColor;
  }

  main {
    flex: 1;
    min-width: 0;
    overflow: hidden;
    color: #56626f;
  }
  header {
    display: flex;
    align-items: center;
    height: 63px;
    padding: 0 24px 0 10px;
    background: linear-gradient(90deg, #2279b9, #2a93ca 45%, #30b8db);
    color: #cdf0fb;
  }
  .collapse,
  .tools {
    padding-bottom: 3px;
  }
  header input {
    box-sizing: border-box;
    width: 315px;
    height: 37px;
    margin-left: 11px;
    padding: 0 14px;
    border: 0;
    background: #fff;
    font: italic 300 14px Rubik, Roboto, sans-serif;
  }
  header input::placeholder {
    color: #555;
  }
  .tools {
    display: flex;
    align-items: center;
    margin-left: auto;
    gap: 5px;
  }
  .tool {
    position: relative;
    width: 32px;
  }
  .pulse {
    position: absolute;
    top: -3px;
    right: 7px;
    width: 5px;
    height: 5px;
    border-radius: 50%;
    background: #f43648;
    box-shadow: 0 0 0 3px #5a96bc88, 0 0 0 5px #8c6f9699;
  }
  .brand-pill {
    width: 27px;
    height: 15px;
    margin-left: 8px;
    border-radius: 4px;
    background: linear-gradient(#1d6be0 45%, #3c80e8 45% 60%, #1d6be0 60%);
  }

  .title {
    padding: 26px 27px 0;
  }
  h1 {
    margin: 0;
    font-weight: 400;
    font-size: 19px;
    line-height: 22px;
    color: #2488d0;
  }
  .crumbs {
    display: flex;
    align-items: center;
    gap: 12px;
    height: 33px;
  }
  .crumbs a {
    color: #3a8ce0;
  }
  .crumbs svg {
    fill: none;
    stroke: #9aa4ad;
  }

  .card {
    margin: 17px 27px 0;
    background: #fff;
  }
  .tabs {
    display: flex;
    height: 50px;
    border-bottom: 1px solid #d6d9db;
  }
  .tabs a {
    position: relative;
    padding: 0 19px;
    line-height: 48px;
  }
  .tabs .active {
    margin-bottom: -1px;
    border-bottom: 1px solid #2488c0;
  }
  .tabs .active,
  .tabs .hover {
    color: #3a8ce0;
  }
  .pointer {
    position: absolute;
    top: 23px;
    left: 32px;
    fill: #fff;
    stroke: #111;
  }

  .actions {
    display: flex;
    flex-direction: column;
    gap: 9px;
    padding: 18px 20px 0 55px;
  }
  .action-row {
    display: flex;
  }
  .action-group {
    display: flex;
    flex: 1;
    justify-content: center;
    gap: 6px;
  }
  .action {
    height: 30px;
    padding: 0 9px 3px;
    border: 1px solid #2488e0;
    border-radius: 3px;
    background: #2894f8;
    color: #fff;
    font: 13px "Liberation Sans", Arial, sans-serif;
    white-space: nowrap;
  }
  .danger {
    border-color: #f43648;
    background: #f43648;
  }

  .steps {
    display: flex;
    justify-content: space-between;
    margin: 51px 98px 0;
    background: linear-gradient(#ccc, #ccc) center / 100% 1px no-repeat;
  }
  .step {
    display: flex;
    justify-content: center;
    box-sizing: border-box;
    width: 26px;
    height: 26px;
    padding-top: 4px;
    border: 1px solid #c4c4c4;
    border-radius: 50%;
    background: #fff;
    color: #222;
  }

  .columns {
    display: grid;
    grid-template-columns: 47fr 106fr 47fr;
    padding: 0 20px;
  }
  .scores {
    display: flex;
    flex-direction: column;
    align-items: center;
    gap: 44px;
    padding-top: 37px;
  }
  h2 {
    margin: 0 0 -7px;
    font-weight: 400;
    font-size: 14px;
    line-height: 20px;
    color: #8b98a5;
  }
  .gauge path {
    fill: none;
    stroke-width: 8;
  }
  .gauge text {
    text-anchor: middle;
    fill: #444;
    font-family: "Liberation Sans", Arial, sans-serif;
    font-weight: 400;
    font-size: 13px;
  }
  .gauge .score {
    fill: #e2385a;
    font-size: 26px;
  }
  .ring .bureau {
    fill: #56626f;
    font-family: Rubik, Roboto, sans-serif;
    font-weight: 300;
    font-size: 14px;
  }

  .client {
    display: flex;
    padding: 65px 20px 0 30px;
  }
  .sections {
    display: flex;
    flex-direction: column;
    flex: none;
    gap: 8px;
    width: 134px;
    border-right: 1px solid #e4e6e8;
    padding-bottom: 40px;
    color: #36424e;
  }
  .sections a {
    height: 36px;
    padding-left: 15px;
    line-height: 35px;
  }
  .sections .active {
    border-radius: 3px 0 0 3px;
    background: #2894f8;
    color: #fff;
  }
  .fields {
    display: grid;
    grid-template-columns: repeat(12, 1fr);
    grid-auto-rows: 40px;
    flex: 1;
    padding: 8px 0 0 18px;
    font-size: 12px;
  }
  .field {
    display: flex;
    align-items: center;
    gap: 2px;
    color: #4a5666;
    white-space: nowrap;
  }
  .field b,
  .field label {
    font-weight: 600;
  }
  .field a {
    border-bottom: 1px dashed #2488c0;
    color: #4b98e4;
    font-size: 11px;
    line-height: 16px;
  }
  .field .small {
    margin-left: 2px;
    font-size: 9px;
    font-weight: 400;
  }
  .field .blank {
    color: #e8b0b0;
  }
  .copy {
    margin: -10px 0 0 8px;
    color: #2894f8;
  }
  .select {
    position: relative;
  }
  .select::after {
    content: "";
    position: absolute;
    top: 9px;
    right: 8px;
    border: 3px solid transparent;
    border-top-color: #222;
    border-bottom: 0;
  }
  select {
    height: 20px;
    padding: 0 18px 1px 8px;
    border: 1px solid #bcbcbc;
    border-radius: 3px;
    background: #dadada;
    color: #222;
    font: 9px "Liberation Sans", Arial, sans-serif;
    appearance: none;
  }

  .scrollbar {
    box-sizing: border-box;
    display: flex;
    flex-direction: column;
    align-items: center;
    flex: none;
    width: 17px;
    padding: 6px 0;
    background: #f1f1f1;
  }
  .thumb {
    width: 13px;
    height: 72%;
    margin: 6px 0 auto;
    background: #bdbdbd;
  }

  /* downloads shelf */
  .downloads {
    box-sizing: border-box;
    display: flex;
    align-items: center;
    flex: none;
    height: 57px;
    padding-right: 11px;
    border-top: 1px solid #2d4a6a;
    background: #143262;
    color: #8794ad;
  }
  .download {
    display: flex;
    align-items: center;
    height: 43px;
    margin-right: auto;
    padding: 0 18px 0 20px;
    gap: 14px;
    border-right: 1px solid #41649a;
    color: #a3b1ca;
  }
  .download button {
    margin-left: 10px;
  }
  .show-all {
    height: 32px;
    margin-right: 12px;
    padding: 0 15px;
    border: 1px solid #1e3a5c;
    border-radius: 3px;
    color: #8ab4f8;
    font-weight: 600;
  }

  /* windows taskbar */
  .taskbar {
    display: grid;
    grid-template-columns: 1fr auto 1fr;
    align-items: center;
    flex: none;
    height: 48px;
    background: linear-gradient(90deg, #3a1408, #2f180a 20%, #33130a 40%, #3d0c0a 60%, #38110d 85%, #2c1014);
    color: #f4ecea;
  }
  .weather {
    display: flex;
    align-items: center;
    gap: 9px;
    padding-left: 21px;
  }
  .weather div,
  .clock {
    display: flex;
    flex-direction: column;
    line-height: 16px;
  }
  .soft {
    color: #d6c3bc;
  }
  .apps {
    display: flex;
  }
  .app {
    position: relative;
    width: 44px;
    height: 40px;
  }
  .app.current {
    border-radius: 4px;
    background: #ffffff1c;
  }
  .app.running::after,
  .app.current::after {
    content: "";
    position: absolute;
    bottom: 0;
    width: 6px;
    height: 3px;
    border-radius: 2px;
    background: #b89a94;
  }
  .app.current::after {
    width: 16px;
    background: #5fb4f0;
  }
  .bubble {
    position: absolute;
    top: 0;
    right: 4px;
    display: flex;
    align-items: center;
    justify-content: center;
    width: 15px;
    height: 16px;
    border-radius: 50%;
    font-size: 10px;
  }
  .grey {
    background: #4c5a64;
  }
  .blue {
    background: #6cbcf0;
    color: #0c2c50;
  }
  .red {
    background: #e8281c;
  }
  .tray {
    display: flex;
    align-items: center;
    justify-content: flex-end;
    padding-right: 19px;
  }
  .mic {
    margin: 0 22px 0 10px;
    color: #8cc0e4;
  }
  .status {
    display: flex;
    gap: 8px;
    margin: 0 14px 0 17px;
  }
  .clock {
    align-items: flex-end;
    margin-right: 9px;
  }
</style>
